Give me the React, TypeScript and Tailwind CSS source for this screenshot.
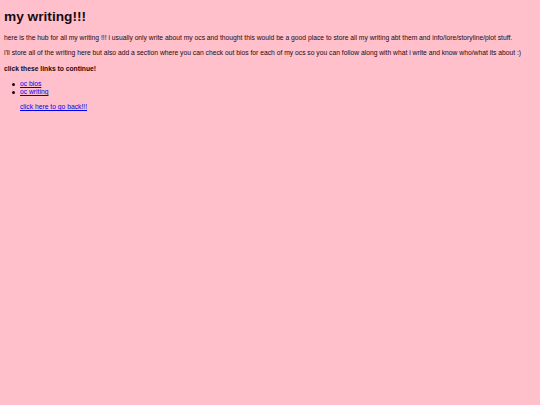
export default function App() {
  return (
    <div
      className="min-h-[405px] bg-[#ffc0cb] px-[4px] pt-[9px] text-[#1a0a10]"
      style={{ fontFamily: '"Liberation Sans", Arial, sans-serif' }}
    >
      <h1 className="text-[13.7px] font-bold leading-[15px]">my writing!!!</h1>
      <p className="mt-[10px] text-[6.74px] leading-[8px]">
        here is the hub for all my writing !!! i usually only write about my ocs and thought this would be a good place
        to store all my writing abt them and info/lore/storyline/plot stuff.
      </p>
      <p className="mt-[7px] text-[6.74px] leading-[8px]">
        i'll store all of the writing here but also add a section where you can check out bios for each of my ocs so you
        can follow along with what i write and know who/what its about :)
      </p>
      <p className="mt-[8px] text-[6.74px] font-bold leading-[8px]">click these links to continue!</p>
      <ul className="mt-[7px] pl-[16px] text-[6.74px] leading-[8px]">
        <li className="flex items-center">
          <span className="-ml-[8px] mr-[5px] h-[3px] w-[3px] rounded-full bg-[#1a0a10]" />
          <a href="#" className="text-[#0000ee] underline">
            oc bios
          </a>
        </li>
        <li className="flex items-center">
          <span className="-ml-[8px] mr-[5px] h-[3px] w-[3px] rounded-full bg-[#1a0a10]" />
          <a href="#" className="text-[#0000ee] underline">
            oc writing
          </a>
        </li>
        <p className="mt-[7px]">
          <a href="#" className="text-[#0000ee] underline">
            click here to go back!!!
          </a>
        </p>
      </ul>
    </div>
  )
}
